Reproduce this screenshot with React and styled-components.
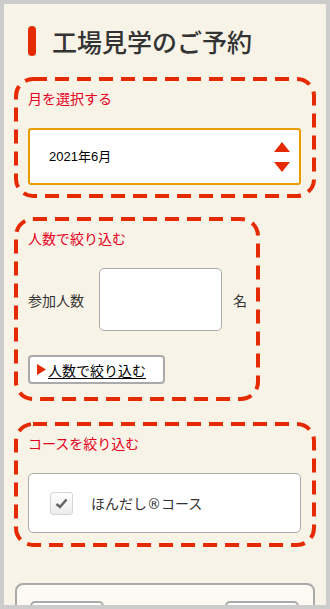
import React, { useState } from 'react';
import styled, { createGlobalStyle } from 'styled-components';

const GlobalStyles = createGlobalStyle`
  html, body {
    margin: 0;
    padding: 0;
    background: #cccccc;
  }
  body {
    font-family: "Noto Sans CJK JP", "Liberation Sans", sans-serif;
    color: #333;
  }
`;

const Frame = styled.div`
  margin: 4px;
  height: 601px;
  overflow: hidden;
  background: #f8f3e7;
  padding: 0 10px;
  box-sizing: border-box;
`;

const Title = styled.h1`
  display: flex;
  align-items: center;
  gap: 16px;
  margin: 0;
  padding: 22px 0 0 14px;
  height: 30px;
  font-size: 25px;
  font-weight: 500;
  line-height: 30px;
  color: #333;

  &:before {
    content: "";
    display: block;
    width: 8px;
    height: 30px;
    border-radius: 4px;
    background: #e62a00;
  }
`;

const FilterBox = styled.section`
  position: relative;
  display: ${p => (p.$fit ? 'inline-block' : 'block')};
  vertical-align: top;
  box-sizing: border-box;
  width: ${p => (p.$fit ? 'auto' : '302px')};
  margin-top: ${p => p.$top}px;
  padding: 7px ${p => p.$right || 12}px ${p => p.$bottom}px 10px;
  border: 4px solid transparent;
`;

const DashedEdge = styled.svg`
  position: absolute;
  inset: -2px;
  width: calc(100% + 4px);
  height: calc(100% + 4px);
  overflow: visible;
  pointer-events: none;

  rect {
    fill: none;
    stroke: #e62a00;
    stroke-width: 4;
    stroke-dasharray: 14 8;
  }
`;

const Dashed = () => (
  <DashedEdge>
    <rect x="0" y="0" width="100%" height="100%" rx="17" ry="17" />
  </DashedEdge>
);

const BoxLabel = styled.div`
  font-size: 14px;
  line-height: 20px;
  color: #e5001b;
  margin-bottom: 20px;
`;

const SelectWrap = styled.div`
  position: relative;
  width: 273px;
`;

const MonthSelect = styled.select`
  appearance: none;
  -webkit-appearance: none;
  display: block;
  box-sizing: border-box;
  width: 100%;
  height: 57px;
  padding: 0 40px 0 19px;
  border: 2px solid #e89c00;
  border-radius: 3px;
  background: #fff;
  font-family: "Liberation Sans", "Noto Sans CJK JP", sans-serif;
  font-size: 13px;
  color: #000;
  outline: none;
`;

const Arrows = styled.svg`
  position: absolute;
  right: 10px;
  top: 14px;
  pointer-events: none;
`;

const CountRow = styled.div`
  display: flex;
  align-items: center;
  font-size: 14px;
  color: #333;
`;

const CountInput = styled.input`
  box-sizing: border-box;
  width: 123px;
  height: 63px;
  margin: 0 11px 0 15px;
  border: 1px solid #aaa;
  border-radius: 5px;
  background: #fff;
  outline: none;
`;

const FilterButton = styled.button`
  display: inline-flex;
  align-items: center;
  gap: 2px;
  box-sizing: border-box;
  width: 137px;
  height: 29px;
  margin-top: 24px;
  padding: 0 0 0 7px;
  border: 2px solid #aaa;
  border-radius: 4px;
  background: #fff;
  font-family: "Noto Sans CJK JP", sans-serif;
  font-size: 14px;
  color: #000;
  cursor: pointer;

  span {
    text-decoration: underline;
    text-underline-offset: 2px;
  }
`;

const CourseCard = styled.label`
  display: flex;
  align-items: center;
  gap: 18px;
  box-sizing: border-box;
  width: 273px;
  height: 60px;
  padding-left: 21px;
  border: 1px solid #aaa;
  border-radius: 5px;
  background: #fff;
  font-size: 14px;
  color: #333;
  cursor: pointer;
`;

const Registered = styled.span`
  font-family: "DejaVu Sans", sans-serif;
  font-size: 14px;
`;

const CheckMark = styled.span`
  display: flex;
  align-items: center;
  justify-content: center;
  box-sizing: border-box;
  width: 23px;
  height: 23px;
  border: 1px solid #d4d4d4;
  border-radius: 3px;
  background: linear-gradient(#ffffff, #ececec);
`;

const NavCard = styled.div`
  display: flex;
  justify-content: space-between;
  box-sizing: border-box;
  width: 300px;
  margin: 36px 0 0 1px;
  padding: 16px 14px 16px 13px;
  border: 2px solid #aaa;
  border-radius: 8px;
  background: #fcfaf3;
`;

const NavButton = styled.button`
  width: 74px;
  height: 40px;
  border: 2px solid #aaa;
  border-radius: 5px;
  background: #fff;
`;

const App = () => {
  const [month, setMonth] = useState('2021-06');
  const [count, setCount] = useState('');
  const [checked, setChecked] = useState(true);

  return (
    <>
      <GlobalStyles />
      <Frame>
        <Title>工場見学のご予約</Title>

        <FilterBox $top={21} $bottom={9}>
          <Dashed />
          <BoxLabel>月を選択する</BoxLabel>
          <SelectWrap>
            <MonthSelect value={month} onChange={e => setMonth(e.target.value)}>
              <option value="2021-06">2021年6月</option>
              <option value="2021-07">2021年7月</option>
              <option value="2021-08">2021年8月</option>
            </MonthSelect>
            <Arrows width="18" height="32" viewBox="0 0 18 32">
              <path d="M9 0 L17 10 L1 10 Z" fill="#e62a00" />
              <path d="M1 20 L17 20 L9 30 Z" fill="#e62a00" />
            </Arrows>
          </SelectWrap>
        </FilterBox>

        <div>
          <FilterBox $fit $top={19} $bottom={13} $right={9}>
            <Dashed />
            <BoxLabel>人数で絞り込む</BoxLabel>
            <CountRow>
              参加人数
              <CountInput value={count} onChange={e => setCount(e.target.value)} />
              名
            </CountRow>
            <FilterButton type="button">
              <svg width="9" height="11" viewBox="0 0 9 11">
                <path d="M0 0 L9 5.5 L0 11 Z" fill="#e62a00" />
              </svg>
              <span>人数で絞り込む</span>
            </FilterButton>
          </FilterBox>
        </div>

        <FilterBox $top={21} $bottom={10}>
          <Dashed />
          <BoxLabel>コースを絞り込む</BoxLabel>
          <CourseCard onClick={() => setChecked(!checked)}>
            <CheckMark>
              {checked && (
                <svg width="13" height="11" viewBox="0 0 13 11">
                  <path d="M1.5 6 L5 9 L11.5 1.5" fill="none" stroke="#666" strokeWidth="2.6" />
                </svg>
              )}
            </CheckMark>
            <span>
              ほんだし<Registered>®</Registered>コース
            </span>
          </CourseCard>
        </FilterBox>

        <NavCard>
          <NavButton type="button" aria-label="前の月" />
          <NavButton type="button" aria-label="次の月" />
        </NavCard>
      </Frame>
    </>
  );
};

export default App;
